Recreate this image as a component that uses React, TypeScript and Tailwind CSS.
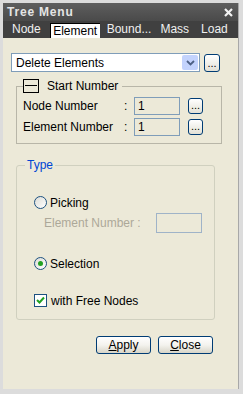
import React from "react";

const font = { fontFamily: '"Liberation Sans", Arial, sans-serif' };

function DotsButton({ className = "" }: { className?: string }) {
  return (
    <div
      className={`flex items-end justify-center rounded-[3px] border border-[#003c74] bg-gradient-to-b from-white to-[#e3e1d6] pb-[2px] text-[11px] leading-none text-black ${className}`}
    >
      ...
    </div>
  );
}

function XPButton({ letter, rest }: { letter: string; rest: string }) {
  return (
    <div className="flex h-[18px] w-[55px] items-center justify-center rounded-[3px] border border-[#003c74] bg-gradient-to-b from-white via-[#f4f3ee] to-[#d8d5c8] text-[12px] leading-none text-black">
      <span className="underline">{letter}</span>
      {rest}
    </div>
  );
}

export default function App() {
  return (
    <div
      style={font}
      className="flex h-[394px] w-[243px] flex-col bg-[#dcdcdc] pb-[5px] pl-[3px] pr-[4px] pt-[3px]"
    >
      <div className="flex flex-1 flex-col border-r border-[#a8a8a8]">
        {/* title */}
        <div className="flex h-[18px] items-center justify-between bg-gradient-to-b from-[#5e5e5e] to-[#4a4a4a] pl-[4px] pr-[5px]">
          <span className="text-[12px] font-bold tracking-[0.8px] text-[#e4e4e4]">
            Tree Menu
          </span>
          <svg width="9" height="9" viewBox="0 0 9 9">
            <path d="M1 1 L8 8 M8 1 L1 8" stroke="#f2f2f2" strokeWidth="2.2" />
          </svg>
        </div>
        {/* tabs */}
        <div className="flex h-[17px] items-end bg-[#404040] text-[12px] leading-none text-[#f0f0f0]">
          <span className="mb-[3px] ml-[9px]">Node</span>
          <span className="ml-[9px] flex h-[15px] w-[50px] items-center justify-center border-l border-t border-black bg-white text-black">
            Element
          </span>
          <span className="mb-[3px] ml-[7px]">Bound...</span>
          <span className="mb-[3px] ml-[9px]">Mass</span>
          <span className="mb-[3px] ml-[12px]">Load</span>
        </div>
        {/* content */}
        <div className="flex flex-1 flex-col bg-[#ece9d8] text-[12px] text-black">
          <div className="ml-[8px] mt-[15px] flex items-center gap-[4px]">
            <div className="flex h-[19px] w-[189px] items-center justify-between border border-[#7f9db9] bg-white pl-[4px] pr-[1px]">
              <span className="leading-none">Delete Elements</span>
              <div className="flex h-[15px] w-[16px] items-center justify-center rounded-[2px] bg-[#c3d3fd]">
                <svg width="9" height="6" viewBox="0 0 9 6">
                  <path d="M1 1 L4.5 4.5 L8 1" stroke="#4d6185" strokeWidth="1.8" fill="none" />
                </svg>
              </div>
            </div>
            <DotsButton className="h-[18px] w-[16px]" />
          </div>

          <fieldset className="ml-[13px] mt-[7px] w-[206px] border border-[#b8b6a8] pb-[7px] pl-[6px]">
            <legend className="flex items-center pr-[4px]">
              <span className="relative h-[14px] w-[16px] border border-black bg-[#ece9d8]">
                <span className="absolute left-[1px] right-[1px] top-[5px] h-px bg-black" />
              </span>
              <span className="ml-[8px] leading-none">Start Number</span>
            </legend>
            <div className="mt-[4px] flex items-center">
              <span className="w-[101px]">Node Number</span>
              <span className="w-[10px]">:</span>
              <div className="flex h-[18px] w-[46px] items-center border border-[#7f9db9] pl-[3px] leading-none">1</div>
              <DotsButton className="ml-[8px] h-[16px] w-[15px]" />
            </div>
            <div className="mt-[3px] flex items-center">
              <span className="w-[101px]">Element Number</span>
              <span className="w-[10px]">:</span>
              <div className="flex h-[18px] w-[46px] items-center border border-[#7f9db9] pl-[3px] leading-none">1</div>
              <DotsButton className="ml-[8px] h-[16px] w-[15px]" />
            </div>
          </fieldset>

          <fieldset className="ml-[13px] mt-[14px] h-[162px] w-[199px] rounded-[3px] border border-[#d0d0bf] pl-[17px]">
            <legend className="ml-[-9px] px-[2px] leading-[14px] text-[#0046d5]">Type</legend>
            <div className="mt-[24px] flex items-center">
              <span className="h-[13px] w-[13px] rounded-full border border-[#1c5180] bg-gradient-to-br from-[#dcdcd6] to-white" />
              <span className="ml-[3px] leading-none">Picking</span>
            </div>
            <div className="mt-[4px] flex items-center">
              <span className="ml-[10px] w-[112px] leading-none text-[#aca899]">Element Number :</span>
              <div className="h-[20px] w-[46px] border border-[#9fb3c8]" />
            </div>
            <div className="mt-[24px] flex items-center">
              <span className="flex h-[13px] w-[13px] items-center justify-center rounded-full border border-[#1c5180] bg-gradient-to-br from-[#dcdcd6] to-white">
                <span className="h-[5px] w-[5px] rounded-full bg-[#21a121]" />
              </span>
              <span className="ml-[3px] leading-none">Selection</span>
            </div>
            <div className="mt-[24px] flex items-center">
              <span className="flex h-[13px] w-[13px] items-center justify-center border border-[#1c5180] bg-white">
                <svg width="9" height="9" viewBox="0 0 9 9">
                  <path d="M1 4 L3.5 6.5 L8 1.5" stroke="#21a121" strokeWidth="2" fill="none" />
                </svg>
              </span>
              <span className="ml-[4px] leading-none">with Free Nodes</span>
            </div>
          </fieldset>

          <div className="ml-[93px] mt-[16px] flex gap-[7px]">
            <XPButton letter="A" rest="pply" />
            <XPButton letter="C" rest="lose" />
          </div>
        </div>
      </div>
    </div>
  );
}
